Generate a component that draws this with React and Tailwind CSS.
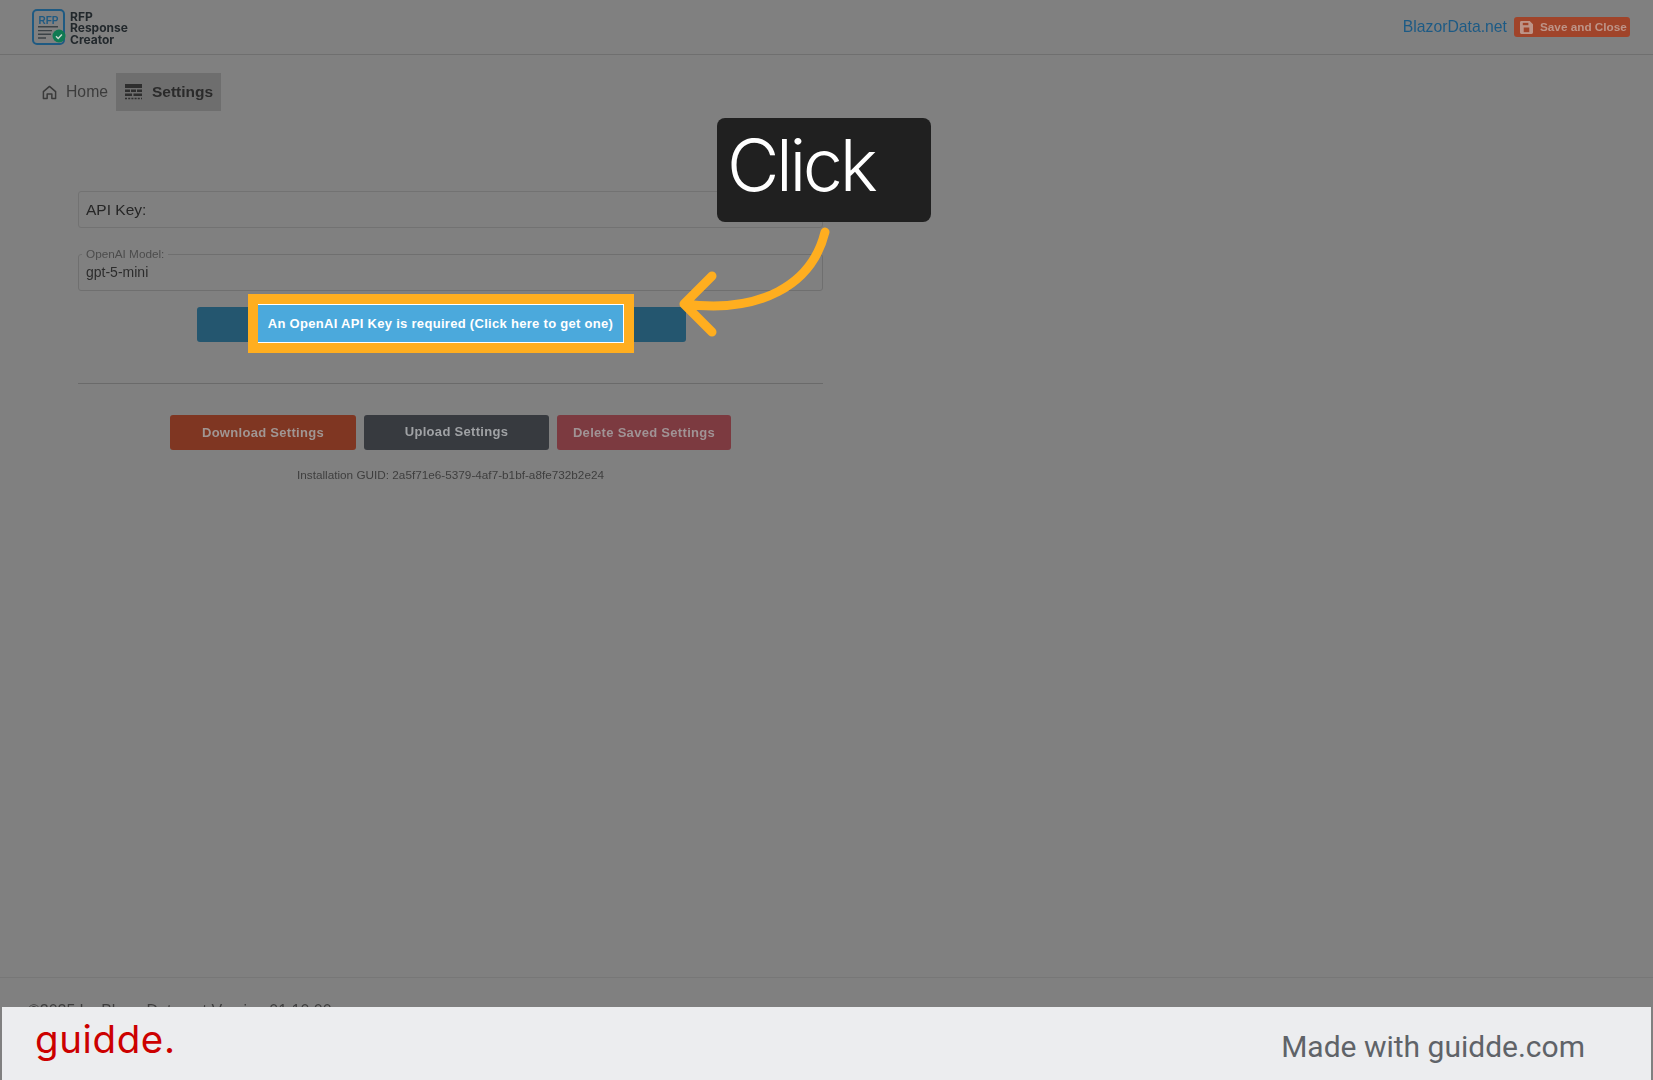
import React from "react";

const Logo = () => (
  <svg width="36" height="38" viewBox="0 0 36 38" className="shrink-0">
    <rect x="2" y="2" width="31" height="34" rx="4" fill="none" stroke="#1f5a82" strokeWidth="2" />
    <text x="7.5" y="15.5" fontSize="10" fontWeight="700" fill="#1f5a82" fontFamily="Liberation Sans, sans-serif">
      RFP
    </text>
    <path d="M7 18.8h20M7 22.6h14M7 26.3h13M7 30h8" stroke="#3b4246" strokeWidth="1.4" fill="none" />
    <circle cx="28" cy="28" r="6.5" fill="#0f7a52" />
    <path d="M25 28.2l2.2 2.2 3.7-4" stroke="#c8d8d0" strokeWidth="1.4" fill="none" />
  </svg>
);

const HomeIcon = () => (
  <svg width="15" height="15" viewBox="0 0 16 16" className="shrink-0" fill="none" stroke="#3a3a3a" strokeWidth="1.6">
    <path d="M1.5 7L8 1.5 14.5 7v7.5h-4V9.5h-5v5h-4z" strokeLinejoin="round" />
  </svg>
);

const SettingsIcon = () => (
  <svg width="17" height="16" viewBox="0 0 17 16" className="shrink-0" fill="#2e2e2e">
    <rect x="0" y="0" width="17" height="4" />
    <rect x="0" y="5.5" width="5" height="2.5" />
    <rect x="6" y="5.5" width="5" height="2.5" />
    <rect x="12" y="5.5" width="5" height="2.5" />
    <rect x="0" y="9.5" width="7" height="2.5" />
    <rect x="8.5" y="9.5" width="8.5" height="2.5" />
    <path d="M0 14.5h17" stroke="#2e2e2e" strokeWidth="1.5" strokeDasharray="2 1.2" />
  </svg>
);

const SaveIcon = () => (
  <svg width="13" height="13" viewBox="0 0 14 14" className="shrink-0">
    <path d="M1.5 0h9L14 3.5v9a1.5 1.5 0 0 1-1.5 1.5h-11A1.5 1.5 0 0 1 0 12.5v-11A1.5 1.5 0 0 1 1.5 0z" fill="#bd9488" />
    <rect x="3" y="2" width="6" height="2.5" fill="#a0442a" />
    <rect x="4" y="7" width="6" height="5" fill="#a0442a" />
  </svg>
);

export default function App() {
  return (
    <div className="relative h-[1080px] w-full overflow-hidden bg-[#808080] font-['Liberation_Sans',sans-serif]">
      <div className="flex h-[1080px] flex-col blur-[0.7px]">
        <header className="flex h-[55px] shrink-0 items-center justify-between border-b border-[#6f6f6f] pl-[31px] pr-[23px]">
          <div className="flex items-center gap-[3px]">
            <Logo />
            <div className="pt-[2px] font-['Inter',sans-serif] text-[12px] font-bold leading-[11.5px] text-[#22282c]">
              <div>RFP</div>
              <div>Response</div>
              <div>Creator</div>
            </div>
          </div>
          <div className="flex items-center gap-[7px]">
            <span className="text-[15.75px] text-[#1c5a85]">BlazorData.net</span>
            <div className="flex h-[20px] w-[116px] items-center gap-[7px] rounded-[3px] bg-[#a0442a] pl-[6px]">
              <SaveIcon />
              <span className="text-[11.75px] font-bold text-[#bd9488]">Save and Close</span>
            </div>
          </div>
        </header>

        <nav className="mt-[18px] flex h-[38px] items-stretch pl-[40px]">
          <div className="flex w-[76px] items-center gap-[9px] pl-[2px] text-[15.75px] text-[#3c3c3c]">
            <HomeIcon />
            <span>Home</span>
          </div>
          <div className="flex w-[105px] items-center gap-[10px] bg-[#6e6e6e] pl-[9px] text-[15.5px] font-bold text-[#2a2a2a]">
            <SettingsIcon />
            <span>Settings</span>
          </div>
        </nav>

        <main className="ml-[78px] mt-[80px] w-[745px]">
          <div className="flex h-[37px] items-center rounded-[3px] border border-[#727272] pl-[7px] text-[15.5px] text-[#262626]">
            API Key:
          </div>
          <div className="relative mt-[26px] flex h-[37px] items-end rounded-[3px] border border-[#6f6f6f] pb-[11px] pl-[7px] text-sm leading-none text-[#2c2c2c]">
            <span className="absolute left-[3px] top-[-8px] bg-[#808080] px-[4px] text-[11.75px] leading-[14px] text-[#4c4c4c]">
              OpenAI Model:
            </span>
            gpt-5-mini
          </div>
          <div className="ml-[119px] mt-[16px] h-[35px] w-[489px] rounded-[3px] bg-[#24566f]" />
          <hr className="mt-[41px] border-[#6a6a6a]" />
          <div className="mt-[31px] flex justify-center gap-[8px]">
            <div className="flex h-[35px] w-[186px] items-center justify-center rounded-[3px] bg-[#7f3622] text-[13px] font-bold tracking-[0.3px] text-[#a09693]">
              Download Settings
            </div>
            <div className="flex h-[35px] w-[185px] items-center justify-center rounded-[3px] bg-[#373a3f] pb-[2px] text-[13px] font-bold tracking-[0.3px] text-[#a0a2a5]">
              Upload Settings
            </div>
            <div className="flex h-[35px] w-[174px] items-center justify-center rounded-[3px] bg-[#7c3a40] text-[13px] font-bold tracking-[0.3px] text-[#a09395]">
              Delete Saved Settings
            </div>
          </div>
          <div className="mt-[16px] text-center text-[11.75px] text-[#3e3e3e]">
            Installation GUID: 2a5f71e6-5379-4af7-b1bf-a8fe732b2e24
          </div>
        </main>

        <footer className="mt-auto h-[103px] shrink-0 border-t border-[#777777] pl-[28px] pt-[21px] text-base text-[#3e3e3e]">
          ©2025 by BlazorData.net Version 01.10.00
        </footer>
      </div>

      {/* highlighted button */}
      <div className="absolute left-[248px] top-[294px] h-[59px] w-[386px] border-[10px] border-[#ffae1f]">
        <div className="flex h-full items-center justify-center border-y border-r border-white bg-[#4ba9dc] text-[13px] font-bold tracking-[0.3px] text-white">
          An OpenAI API Key is required (Click here to get one)
        </div>
      </div>

      {/* callout */}
      <div className="absolute left-[717px] top-[118px] h-[104px] w-[214px] rounded-[8px] bg-[#202020] pl-[10px] pt-[3px] font-['Inter',sans-serif] text-[72px] font-light leading-[88px] tracking-[-3.4px] text-white">
        Click
      </div>

      {/* arrow */}
      <svg className="absolute left-[670px] top-[220px]" width="170" height="125" viewBox="670 220 170 125" fill="none">
        <path
          d="M825 232C812 285 760 314 684 304M712 276L684 304L712 332"
          stroke="#ffae1f"
          strokeWidth="9"
          strokeLinecap="round"
          strokeLinejoin="round"
        />
      </svg>

      {/* watermark band */}
      <div className="absolute bottom-0 left-[2px] right-[2px] flex h-[73px] items-center justify-between bg-[#ecedef] pl-[33px] pr-[66px]">
        <span className="pb-[8px] font-['Inter',sans-serif] text-[38.5px] leading-none tracking-[0.6px] text-[#cc0000]">guidde.</span>
        <span className="pt-[7px] font-['Roboto',sans-serif] text-[30px] leading-none text-[#5f6368]">Made with guidde.com</span>
      </div>
    </div>
  );
}
